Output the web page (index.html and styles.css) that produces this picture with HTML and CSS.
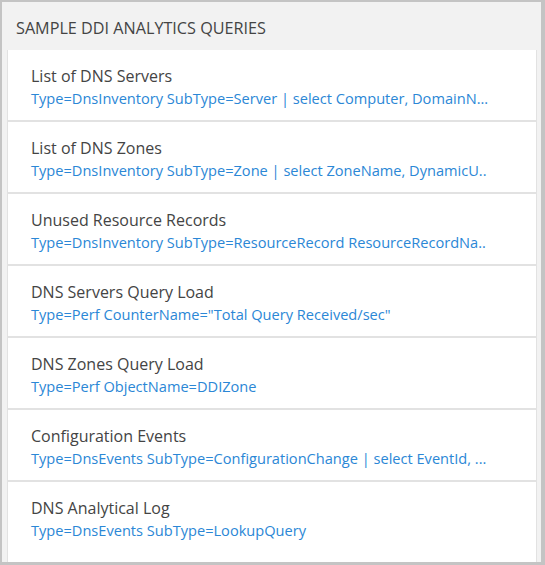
FILE: index.html
```html
<!DOCTYPE html>
<html>
<head>
<meta charset="utf-8">
<link rel="stylesheet" href="styles.css">
</head>
<body>
<div class="panel">
  <div class="panel-header">SAMPLE DDI ANALYTICS QUERIES</div>
  <div class="query-list">
    <div class="query">
      <div class="query-title">List of DNS Servers</div>
      <div class="query-text">Type=DnsInventory SubType=Server | select Computer, DomainN...</div>
    </div>
    <div class="query">
      <div class="query-title">List of DNS Zones</div>
      <div class="query-text">Type=DnsInventory SubType=Zone | select ZoneName, DynamicU..</div>
    </div>
    <div class="query">
      <div class="query-title">Unused Resource Records</div>
      <div class="query-text">Type=DnsInventory SubType=ResourceRecord ResourceRecordNa..</div>
    </div>
    <div class="query">
      <div class="query-title">DNS Servers Query Load</div>
      <div class="query-text">Type=Perf CounterName="Total Query Received/sec"</div>
    </div>
    <div class="query">
      <div class="query-title">DNS Zones Query Load</div>
      <div class="query-text">Type=Perf ObjectName=DDIZone</div>
    </div>
    <div class="query">
      <div class="query-title">Configuration Events</div>
      <div class="query-text">Type=DnsEvents SubType=ConfigurationChange | select EventId, ...</div>
    </div>
    <div class="query last">
      <div class="query-title">DNS Analytical Log</div>
      <div class="query-text">Type=DnsEvents SubType=LookupQuery</div>
    </div>
  </div>
</div>
</body>
</html>
```

FILE: styles.css
```css
html, body {
  margin: 0;
  padding: 0;
  background: #ffffff;
}
.panel {
  width: 545px;
  height: 565px;
  box-sizing: border-box;
  border: 2px solid #c4c4c4;
  border-right-width: 4px;
  border-bottom-width: 3px;
  background: #f2f2f2;
  padding: 0 4px 0 5px;
  display: flex;
  flex-direction: column;
  overflow: hidden;
  font-family: "Open Sans", "Noto Sans", sans-serif;
}
.panel-header {
  height: 48px;
  box-sizing: border-box;
  padding: 4px 0 0 9px;
  line-height: 44px;
  font-size: 16.2px;
  color: #444444;
  flex: none;
}
.query-list {
  flex: 1;
  background: #ffffff;
  border-left: 1px solid #e2e2e2;
  border-right: 1px solid #e2e2e2;
}
.query {
  height: 72px;
  box-sizing: border-box;
  padding: 15px 0 0 23px;
  border-bottom: 2px solid #e2e2e2;
}
.query.last {
  border-bottom: none;
}
.query-title {
  font-size: 16px;
  line-height: 22px;
  color: #444444;
}
.query-text {
  font-size: 14.6px;
  line-height: 22px;
  color: #2b87d6;
  white-space: nowrap;
}
```
